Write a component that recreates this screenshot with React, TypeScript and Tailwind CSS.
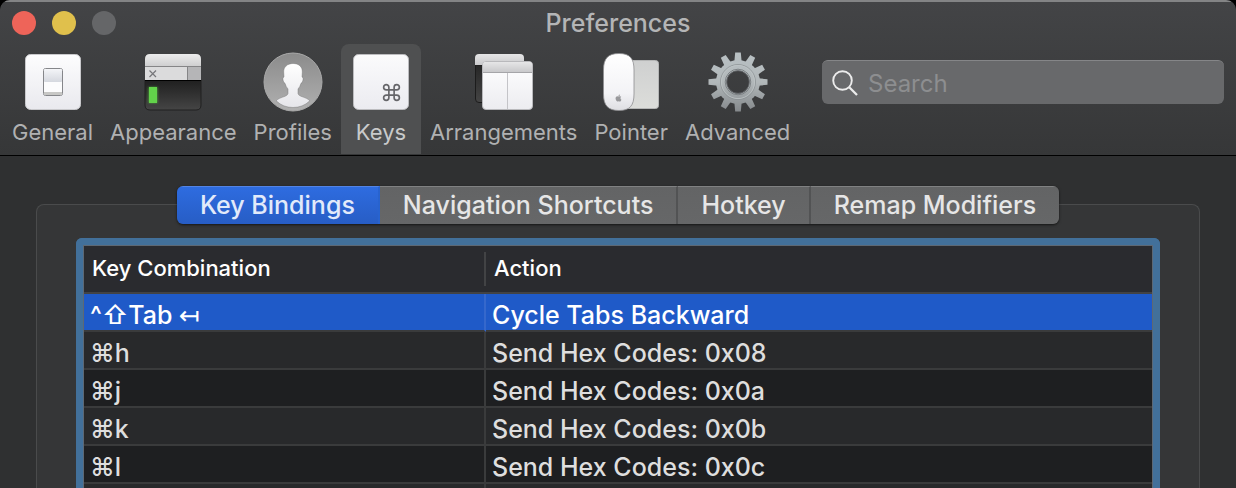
import React, { useState } from "react";
import { Command } from "lucide-react";
import { FaApple } from "react-icons/fa";

function GeneralIcon() {
  return (
    <svg width="60" height="60" viewBox="0 0 60 60" aria-hidden="true">
      <defs>
        <linearGradient id="gen-plate" x1="0" y1="0" x2="0" y2="1">
          <stop offset="0" stopColor="#fdfdfe" />
          <stop offset="1" stopColor="#e9e9ee" />
        </linearGradient>
        <linearGradient id="gen-switch" x1="0" y1="0" x2="0" y2="1">
          <stop offset="0" stopColor="#f4f5f8" />
          <stop offset="1" stopColor="#d5d8df" />
        </linearGradient>
      </defs>
      <rect x="2.5" y="2.5" width="55" height="55" rx="5" fill="url(#gen-plate)" stroke="#c9c9cc" strokeWidth="1" />
      <rect x="20.5" y="16.5" width="19" height="27" rx="2" fill="#fcfcfd" stroke="#85868a" />
      <rect x="21" y="17" width="18" height="13" rx="1" fill="url(#gen-switch)" />
      <rect x="21" y="40" width="18" height="3" fill="#c7c7c5" />
    </svg>
  );
}

function AppearanceIcon() {
  return (
    <svg width="60" height="60" viewBox="0 0 60 60" aria-hidden="true">
      <defs>
        <linearGradient id="app-title" x1="0" y1="0" x2="0" y2="1">
          <stop offset="0" stopColor="#ececec" />
          <stop offset="1" stopColor="#cfcfd0" />
        </linearGradient>
        <linearGradient id="app-body" x1="0" y1="0" x2="0" y2="1">
          <stop offset="0" stopColor="#1f1f1f" />
          <stop offset="1" stopColor="#454545" />
        </linearGradient>
        <filter id="app-glow" x="-50%" y="-50%" width="200%" height="200%">
          <feGaussianBlur stdDeviation="1" />
        </filter>
      </defs>
      <path d="M2 28H58V53Q58 58 53 58H7Q2 58 2 53Z" fill="url(#app-body)" stroke="#202020" strokeWidth="1" />
      <path d="M2 14V7Q2 2 7 2H53Q58 2 58 7V14Z" fill="url(#app-title)" />
      <rect x="2" y="14" width="56" height="14" fill="#dbdbdc" />
      <rect x="44" y="14" width="14" height="14" fill="#b5b5b7" />
      <path d="M2 14.5H58M44.500 14.500V28" stroke="#858587" strokeWidth="1" />
      <path d="M6.500 18.500L13 25M13 18.500L6.500 25" stroke="#77777a" strokeWidth="1.200" />
      <rect x="2" y="28" width="56" height="1" fill="#000" />
      <rect x="5.500" y="35" width="9" height="16" fill="#54c63d" filter="url(#app-glow)" opacity="0.7" />
      <rect x="6" y="35" width="8" height="16" fill="#62d34a" />
    </svg>
  );
}

function ProfilesIcon() {
  return (
    <svg width="60" height="60" viewBox="0 0 60 60" aria-hidden="true">
      <defs>
        <linearGradient id="pro-disc" x1="0" y1="0" x2="0" y2="1">
          <stop offset="0" stopColor="#8b8b8b" />
          <stop offset="1" stopColor="#b0b0b0" />
        </linearGradient>
        <linearGradient id="pro-bust" x1="0" y1="0" x2="0" y2="1">
          <stop offset="0" stopColor="#ffffff" />
          <stop offset="1" stopColor="#e6e6ea" />
        </linearGradient>
      </defs>
      <circle cx="30" cy="30" r="29" fill="url(#pro-disc)" stroke="#a9a9a9" />
      <path
        d="M30 11.500C35.500 11.500 39.500 14.500 39.300 20L39 25Q40.700 25.500 40 28Q39.500 31 38 31.300Q37 35 35 37V41.500Q35.300 43.300 38 44.300C42 45.700 45.500 47 46.800 48.800Q40 55.500 30 55.500T13.200 48.800C14.500 47 18 45.700 22 44.300Q24.700 43.300 25 41.500V37Q23 35 22 31.300Q20.500 31 20 28Q19.300 25.500 21 25L20.700 20C20.500 15 24.500 11.500 30 11.500Z"
        fill="url(#pro-bust)"
        stroke="#6f6f6f"
        strokeOpacity="0.6"
        strokeWidth="0.700"
      />
    </svg>
  );
}

function KeysIcon() {
  return (
    <svg width="60" height="60" viewBox="0 0 60 60" aria-hidden="true">
      <defs>
        <linearGradient id="key-cap" x1="0" y1="0" x2="0" y2="1">
          <stop offset="0" stopColor="#fbfbfc" />
          <stop offset="1" stopColor="#ebebf0" />
        </linearGradient>
      </defs>
      <rect x="2.500" y="2.500" width="55" height="55" rx="5" fill="url(#key-cap)" stroke="#bcbcbf" />
      <Command x={30} y={30} size={21} color="#66666a" strokeWidth={1.900} />
    </svg>
  );
}

function ArrangementsIcon() {
  return (
    <svg width="60" height="60" viewBox="0 0 60 60" aria-hidden="true">
      <defs>
        <linearGradient id="arr-title" x1="0" y1="0" x2="0" y2="1">
          <stop offset="0" stopColor="#e6e6e7" />
          <stop offset="1" stopColor="#c9c9cb" />
        </linearGradient>
        <linearGradient id="arr-dark" x1="0" y1="0" x2="0" y2="1">
          <stop offset="0" stopColor="#262626" />
          <stop offset="1" stopColor="#454545" />
        </linearGradient>
        <linearGradient id="arr-page" x1="0" y1="0" x2="0" y2="1">
          <stop offset="0" stopColor="#ffffff" />
          <stop offset="1" stopColor="#ececf0" />
        </linearGradient>
      </defs>
      <path d="M1.500 13H20V50.500H5Q1.500 50.500 1.500 47Z" fill="url(#arr-dark)" stroke="#1c1c1c" />
      <path d="M1 13V6Q1 2 5 2H46Q50 2 50 6V13Z" fill="url(#arr-title)" />
      <rect x="8.500" y="9.500" width="50" height="48" rx="3.500" fill="url(#arr-page)" stroke="#b9b9bc" />
      <path d="M9 20V13Q9 10 12 10H55Q58 10 58 13V20Z" fill="url(#arr-title)" />
      <path d="M9 20.500H58" stroke="#a5a5a8" />
      <path d="M33.500 21V57" stroke="#c4c4c8" />
    </svg>
  );
}

function PointerIcon() {
  return (
    <svg width="60" height="60" viewBox="0 0 60 60" aria-hidden="true">
      <defs>
        <linearGradient id="poi-mouse" x1="0" y1="0" x2="0" y2="1">
          <stop offset="0" stopColor="#ffffff" />
          <stop offset="0.700" stopColor="#f3f3f6" />
          <stop offset="1" stopColor="#dedee2" />
        </linearGradient>
        <linearGradient id="poi-pad" x1="0" y1="0" x2="0" y2="1">
          <stop offset="0" stopColor="#cfd0d0" />
          <stop offset="1" stopColor="#dcddda" />
        </linearGradient>
      </defs>
      <rect x="22.500" y="8.500" width="35" height="48" rx="3" fill="url(#poi-pad)" stroke="#b5b6b6" />
      <path
        d="M18 1.500C29 1.500 33 6.500 33 18V42C33 53.500 29 58.500 18 58.500S2.500 53.500 2.500 42V18C2.500 6.500 7 1.500 18 1.500Z"
        fill="url(#poi-mouse)"
        stroke="#8e8e90"
        strokeWidth="0.800"
      />
      <FaApple x={13.500} y={42} size={8} color="#98989b" />
    </svg>
  );
}

const TEETH = [0, 30, 60, 90, 120, 150, 180, 210, 240, 270, 300, 330];

function AdvancedIcon() {
  return (
    <svg width="60" height="60" viewBox="0 0 60 60" aria-hidden="true">
      <defs>
        <linearGradient id="adv-metal" gradientUnits="userSpaceOnUse" x1="0" y1="0" x2="0" y2="60">
          <stop offset="0" stopColor="#b9c1c4" />
          <stop offset="0.500" stopColor="#b2b8ba" />
          <stop offset="1" stopColor="#84888b" />
        </linearGradient>
        <mask id="adv-shape">
          <circle cx="30" cy="30" r="22" fill="#fff" />
          {TEETH.map((angle) => (
            <path key={angle} d="M26.300 10L27.200 0.500H32.800L33.700 10Z" fill="#fff" transform={`rotate(${angle} 30 30)`} />
          ))}
          <circle cx="30" cy="30" r="11.500" fill="#000" />
        </mask>
      </defs>
      <rect width="60" height="60" fill="url(#adv-metal)" mask="url(#adv-shape)" />
      <circle cx="30" cy="30" r="17.500" fill="none" stroke="#868c8f" strokeWidth="0.700" />
      <circle cx="30" cy="30" r="16.600" fill="none" stroke="#bfc5c7" strokeWidth="0.800" />
      <circle cx="30" cy="30" r="12.800" fill="none" stroke="#7c8184" strokeWidth="1" />
      <circle cx="30" cy="30" r="11.300" fill="none" stroke="#6b6f72" strokeWidth="0.700" />
    </svg>
  );
}

function SearchIcon() {
  return (
    <svg width="26" height="26" viewBox="0 0 26 26" fill="none" stroke="#ececec" strokeWidth="1.900" aria-hidden="true" className="shrink-0">
      <circle cx="10.500" cy="10.500" r="9.300" />
      <path d="M17 17L25 25" strokeWidth="2.300" />
    </svg>
  );
}

const SECTIONS = [
  { label: "General", Icon: GeneralIcon },
  { label: "Appearance", Icon: AppearanceIcon },
  { label: "Profiles", Icon: ProfilesIcon },
  { label: "Keys", Icon: KeysIcon },
  { label: "Arrangements", Icon: ArrangementsIcon },
  { label: "Pointer", Icon: PointerIcon },
  { label: "Advanced", Icon: AdvancedIcon },
];

const TABS = ["Key Bindings", "Navigation Shortcuts", "Hotkey", "Remap Modifiers"];

const BINDINGS = [
  { keys: "^⇧Tab ↤", action: "Cycle Tabs Backward" },
  { keys: "⌘h", action: "Send Hex Codes: 0x08" },
  { keys: "⌘j", action: "Send Hex Codes: 0x0a" },
  { keys: "⌘k", action: "Send Hex Codes: 0x0b" },
  { keys: "⌘l", action: "Send Hex Codes: 0x0c" },
  { keys: "", action: "" },
];

export default function App() {
  const [section, setSection] = useState("Keys");
  const [tab, setTab] = useState("Key Bindings");
  const [selected, setSelected] = useState(0);

  return (
    <div className="h-screen overflow-hidden bg-black font-['Inter','DejaVu_Sans',sans-serif]">
      <div className="flex h-full flex-col overflow-hidden rounded-t-[10px] bg-[#2f3031]">
        <header className="shrink-0 border-t-2 border-b border-t-[#838485] border-b-black bg-linear-to-b from-[#434446] to-[#363738] pb-px">
          <div className="grid h-[42px] grid-cols-[1fr_auto_1fr] items-center px-3">
            <div className="flex gap-4">
              <button aria-label="Close" className="size-6 rounded-full bg-[#ee6459]" />
              <button aria-label="Minimize" className="size-6 rounded-full bg-[#e0c04c]" />
              <button aria-label="Zoom" className="size-6 rounded-full bg-[#656668]" />
            </div>
            <h1 className="text-[25px] leading-8 font-[450] text-[#b4b5b6]">Preferences</h1>
          </div>
          <div className="flex items-start justify-between pr-3 pl-1">
            <nav className="flex gap-px">
              {SECTIONS.map(({ label, Icon }) => (
                <button
                  key={label}
                  onClick={() => setSection(label)}
                  className={`flex h-[110px] min-w-20 flex-col items-center rounded-t-lg px-2 pt-2 text-[22px] leading-7 ${
                    section === label ? "bg-[#4f5051] text-[#c9cacb]" : "text-[#b0b1b2]"
                  }`}
                >
                  <Icon />
                  <span className="mt-1.5">{label}</span>
                </button>
              ))}
            </nav>
            <label className="mt-4 flex h-11 w-[402px] items-center gap-2.5 rounded-md border-t border-[#858688] bg-[#68696b] px-2.5">
              <SearchIcon />
              <input
                type="search"
                aria-label="Search"
                placeholder="Search"
                className="h-full min-w-0 flex-1 bg-transparent pt-0.5 text-2xl text-white outline-none placeholder:text-[#8d8e90]"
              />
            </label>
          </div>
        </header>

        <main className="mx-9 mt-12 flex flex-1 flex-col rounded-t-lg border border-b-0 border-[#4a4b4c] bg-[#353637] px-[39px]">
          <div role="tablist" className="-mt-[19px] flex self-center overflow-hidden rounded-md shadow-sm shadow-black/50">
            {TABS.map((name) => (
              <button
                key={name}
                role="tab"
                aria-selected={tab === name}
                onClick={() => setTab(name)}
                className={`h-[38px] border-t border-r-2 px-[23px] pb-0.5 text-[25px] leading-[34px] font-[450] last:border-r-0 ${
                  tab === name
                    ? "border-t-[#5384e4] border-r-[#2863cf] bg-linear-to-b from-[#2e6ce0] to-[#275dc5] text-[#e2eafa]"
                    : "border-t-[#808182] border-r-[#525354] bg-linear-to-b from-[#636465] to-[#666768] text-[#e6e6e6]"
                }`}
              >
                {name}
              </button>
            ))}
          </div>

          <div className="mt-3.5 flex-1 rounded-t-md border-[7px] border-b-0 border-[#42709a]">
            <div className="border border-b-0 border-[#5d6874] bg-[#2a2b2f]">
              <table className="w-full table-fixed border-separate border-spacing-0 text-left">
                <colgroup>
                  <col className="w-[402px]" />
                  <col />
                </colgroup>
                <thead>
                  <tr className="h-12 text-[22px] text-white">
                    <th className="border-b-2 border-[#424345] p-0 font-medium">
                      <div className="border-r-2 border-[#424345] pb-0.5 pl-2 leading-8">Key Combination</div>
                    </th>
                    <th className="border-b-2 border-[#424345] p-0 pb-0.5 pl-2 leading-8 font-medium">Action</th>
                  </tr>
                </thead>
                <tbody>
                  {BINDINGS.map((row, i) => {
                    const active = selected === i;
                    return (
                      <tr
                        key={i}
                        onClick={() => setSelected(i)}
                        className={`h-[38px] text-[25px] leading-[30px] font-[450] ${
                          active ? "bg-[#1f5ac8] text-white" : "text-[#dedede] odd:bg-[#1e1f21] even:bg-[#28292b]"
                        }`}
                      >
                        <td
                          className={`border-r-2 border-b-2 border-b-[#3a3b3c] p-0 pt-1.5 pl-1.5 ${
                            active ? "border-r-[#3568cc]" : "border-r-[#3a3b3c]"
                          }`}
                        >
                          {row.keys}
                        </td>
                        <td className="border-b-2 border-b-[#3a3b3c] p-0 pt-1.5 pl-1.5">{row.action}</td>
                      </tr>
                    );
                  })}
                </tbody>
              </table>
            </div>
          </div>
        </main>
      </div>
    </div>
  );
}
